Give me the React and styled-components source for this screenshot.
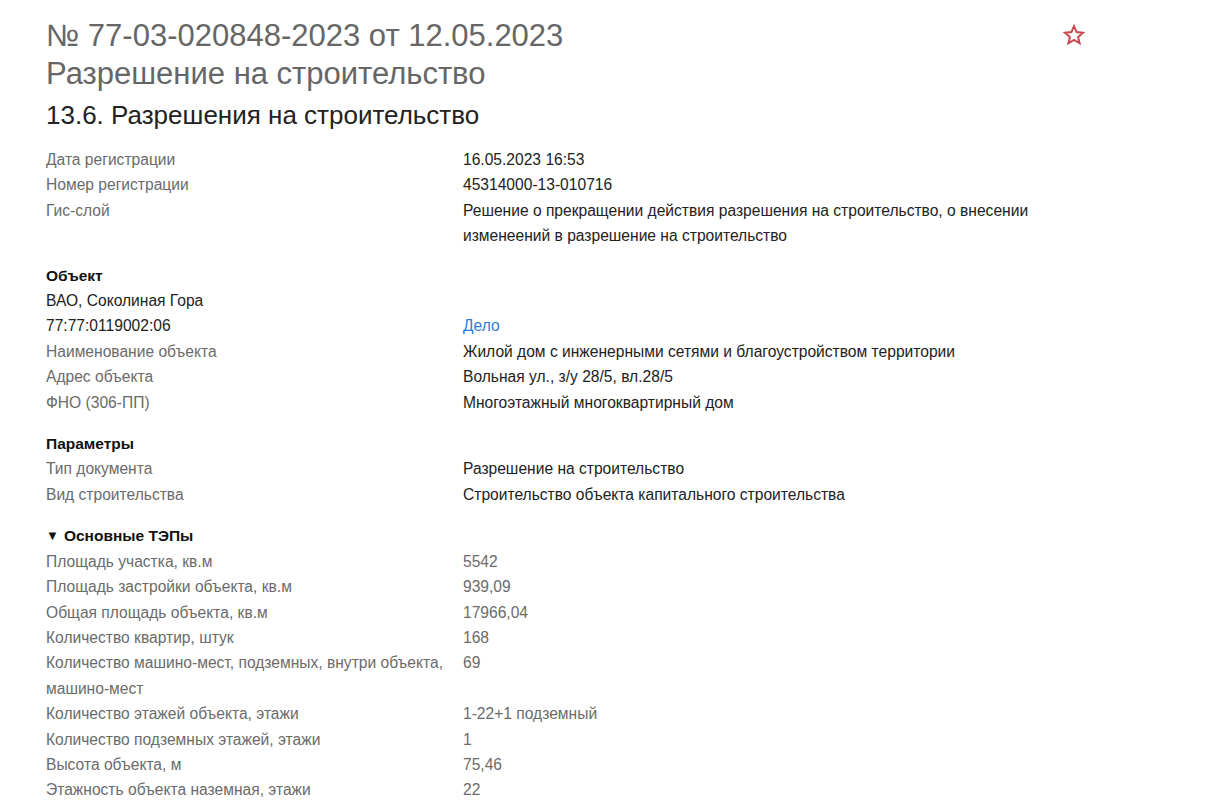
import React from 'react';
import styled, { createGlobalStyle } from 'styled-components';

const GlobalStyle = createGlobalStyle`
  body {
    margin: 0;
    background: #fff;
    font-family: "Liberation Sans", Arial, sans-serif;
  }
`;

const Page = styled.div`
  width: 1040px;
  padding: 17px 0 0 46px;
`;

const Header = styled.div`
  display: flex;
  justify-content: space-between;
  align-items: flex-start;
`;

const Title = styled.h1`
  margin: 0;
  font-size: 31px;
  line-height: 38px;
  font-weight: 400;
  color: #666;
`;

const Star = styled.button`
  border: none;
  background: none;
  padding: 0;
  margin-top: 6px;
  cursor: pointer;
  display: flex;
`;

const Subtitle = styled.h2`
  margin: 5px 0 0;
  font-size: 26px;
  line-height: 34px;
  font-weight: 400;
  color: #222;
`;

const Section = styled.div`
  margin-top: ${(p) => p.$gap || 15}px;
`;

const SectionTitle = styled.div`
  display: flex;
  align-items: center;
  gap: 5px;
  font-size: 15.5px;
  line-height: 25.4px;
  font-weight: 700;
  color: #111;
`;

const Arrow = styled.span`
  font-size: 13px;
  line-height: 1;
`;

const Row = styled.div`
  display: grid;
  grid-template-columns: 412px 1fr;
  column-gap: 5px;
  font-size: 15.6px;
  line-height: 25.4px;
`;

const Label = styled.div`
  color: ${(p) => (p.$dark ? '#222' : '#6b6b6b')};
`;

const Value = styled.div`
  color: ${(p) => (p.$muted ? '#6b6b6b' : '#222')};
`;

const Link = styled.a`
  color: #2f7bd9;
  text-decoration: none;
`;

const Plain = styled.div`
  font-size: 15.6px;
  line-height: 25.4px;
  color: #222;
`;

const main = [
  ['Дата регистрации', '16.05.2023 16:53'],
  ['Номер регистрации', '45314000-13-010716'],
  [
    'Гис-слой',
    'Решение о прекращении действия разрешения на строительство, о внесении изменеений в разрешение на строительство',
  ],
];

const object = [
  ['Наименование объекта', 'Жилой дом с инженерными сетями и благоустройством территории'],
  ['Адрес объекта', 'Вольная ул., з/у 28/5, вл.28/5'],
  ['ФНО (306-ПП)', 'Многоэтажный многоквартирный дом'],
];

const params = [
  ['Тип документа', 'Разрешение на строительство'],
  ['Вид строительства', 'Строительство объекта капитального строительства'],
];

const teps = [
  ['Площадь участка, кв.м', '5542'],
  ['Площадь застройки объекта, кв.м', '939,09'],
  ['Общая площадь объекта, кв.м', '17966,04'],
  ['Количество квартир, штук', '168'],
  ['Количество машино-мест, подземных, внутри объекта, машино-мест', '69'],
  ['Количество этажей объекта, этажи', '1-22+1 подземный'],
  ['Количество подземных этажей, этажи', '1'],
  ['Высота объекта, м', '75,46'],
  ['Этажность объекта наземная, этажи', '22'],
];

function StarIcon() {
  return (
    <svg width="24" height="24" viewBox="0 0 24 24" fill="none">
      <path
        d="M12 3.2l2.6 5.9 6.4.6-4.9 4.3 1.5 6.3L12 17l-5.6 3.3 1.5-6.3L3 9.7l6.4-.6z"
        stroke="#c9474f"
        strokeWidth="2"
        strokeLinejoin="miter"
      />
    </svg>
  );
}

function Rows({ items, muted }) {
  return items.map(([label, value]) => (
    <Row key={label}>
      <Label>{label}</Label>
      <Value $muted={muted}>{value}</Value>
    </Row>
  ));
}

export default function App() {
  return (
    <>
      <GlobalStyle />
      <Page>
        <Header>
          <Title>
            № 77-03-020848-2023 от 12.05.2023
            <br />
            Разрешение на строительство
          </Title>
          <Star aria-label="В избранное">
            <StarIcon />
          </Star>
        </Header>
        <Subtitle>13.6. Разрешения на строительство</Subtitle>

        <Section $gap={15}>
          <Rows items={main} />
        </Section>

        <Section $gap={14}>
          <SectionTitle>Объект</SectionTitle>
          <Plain>ВАО, Соколиная Гора</Plain>
          <Row>
            <Label $dark>77:77:0119002:06</Label>
            <Value>
              <Link href="#">Дело</Link>
            </Value>
          </Row>
          <Rows items={object} />
        </Section>

        <Section $gap={16}>
          <SectionTitle>Параметры</SectionTitle>
          <Rows items={params} />
        </Section>

        <Section $gap={16}>
          <SectionTitle>
            <Arrow>▼</Arrow>Основные ТЭПы
          </SectionTitle>
          <Rows items={teps} muted />
        </Section>
      </Page>
    </>
  );
}
